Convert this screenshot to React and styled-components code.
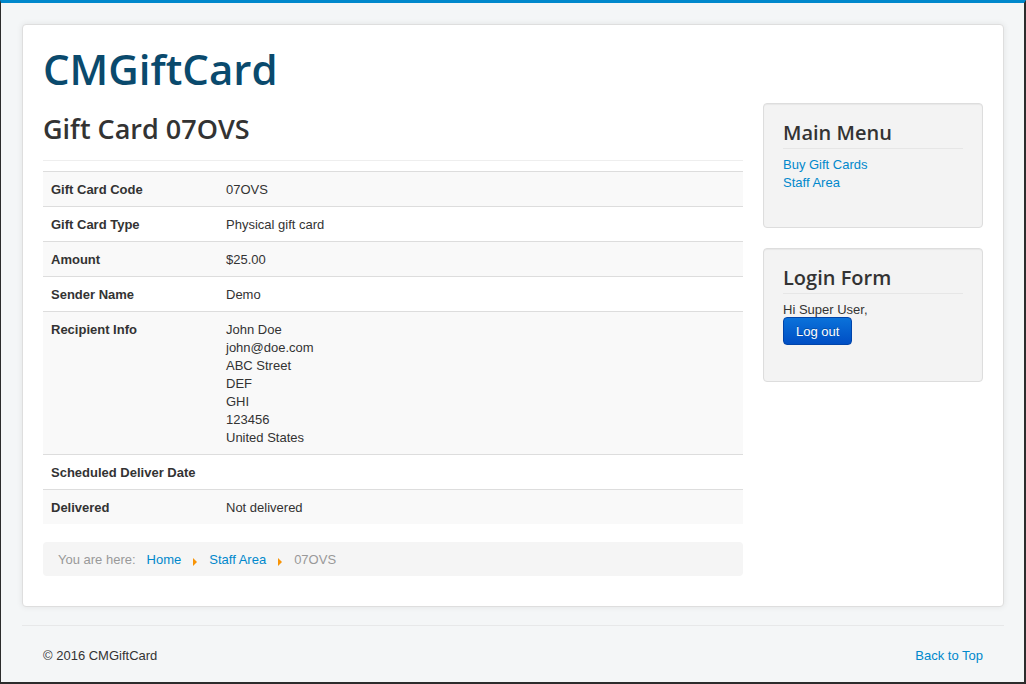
import React from "react";
import styled, { createGlobalStyle } from "styled-components";

const GlobalStyle = createGlobalStyle`
  html, body { margin: 0; padding: 0; }
  body {
    background: #f4f6f7;
    font-family: "Liberation Sans", Arial, sans-serif;
    font-size: 13px;
    line-height: 18px;
    color: #333;
  }
  * { box-sizing: border-box; }
`;

const Frame = styled.div`
  min-height: 684px;
  border-top: 3px solid #0088cc;
  border-left: 1px solid #2c2c2c;
  border-right: 2px solid #2c2c2c;
  border-bottom: 2px solid #2c2c2c;
  padding: 21px 20px 0 21px;
  display: flex;
  flex-direction: column;
`;

const Body = styled.div`
  background: #fff;
  border: 1px solid #dedede;
  border-radius: 4px;
  box-shadow: 0 0 6px rgba(0, 0, 0, 0.08);
  padding: 20px 20px 30px;
`;

const Brand = styled.div`
  font-family: "Open Sans", sans-serif;
  font-weight: 600;
  font-size: 42px;
  line-height: 48px;
  color: #0a4a6d;
  margin: 0 0 10px;
`;

const Row = styled.div`
  display: grid;
  grid-template-columns: 700px 220px;
  column-gap: 20px;
`;

const Main = styled.main``;

const PageHeader = styled.div`
  border-bottom: 1px solid #eee;
  margin: 0 0 10px;
  padding-bottom: 15px;
`;

const Title = styled.h2`
  font-family: "Open Sans", sans-serif;
  font-weight: 600;
  font-size: 27px;
  line-height: 32px;
  margin: 10px 0 0;
  color: #333;
`;

const Table = styled.table`
  width: 100%;
  border-collapse: collapse;
  border-spacing: 0;
`;

const Tr = styled.tr`
  background: ${(p) => (p.$striped ? "#f9f9f9" : "#fff")};
`;

const Th = styled.th`
  width: 175px;
  text-align: left;
  vertical-align: top;
  font-weight: bold;
  padding: 9px 8px 7px;
  border-top: 1px solid #ddd;
  line-height: 18px;
`;

const Td = styled.td`
  text-align: left;
  vertical-align: top;
  padding: 9px 8px 7px;
  border-top: 1px solid #ddd;
  line-height: 18px;
`;

const Breadcrumb = styled.ul`
  list-style: none;
  margin: 18px 0 0;
  padding: 9px 15px 7px;
  background: #f5f5f5;
  border-radius: 4px;
  display: flex;
  align-items: center;
`;

const Crumb = styled.li`
  display: flex;
  align-items: center;
  color: #999;
`;

const Label = styled.span`
  color: #999;
  margin-right: 11px;
`;

const Link = styled.a`
  color: #0088cc;
  text-decoration: none;
`;

const Divider = styled.span`
  display: inline-block;
  width: 0;
  height: 0;
  border-top: 4px solid transparent;
  border-bottom: 4px solid transparent;
  border-left: 4px solid #f89406;
  margin: 3px 12px 0 12px;
`;

const Side = styled.aside``;

const Well = styled.div`
  background: #f3f3f3;
  border: 1px solid #ddd;
  border-radius: 4px;
  box-shadow: inset 0 1px 1px rgba(0, 0, 0, 0.05);
  padding: 19px 19px 17px;
  margin-bottom: 20px;
`;

const WellTitle = styled.h3`
  font-family: "Open Sans", sans-serif;
  font-weight: 600;
  font-size: 20px;
  line-height: 20px;
  margin: 0 0 6px;
  padding: 0 0 5px;
  border-bottom: 1px solid #e6e6e6;
  color: #333;
`;

const Menu = styled.ul`
  list-style: none;
  margin: 0 0 18px;
  padding: 1px 0 0;
`;

const LogoutForm = styled.form`
  margin: 0 0 19px;
`;

const Greeting = styled.div`
  color: #333;
  padding-top: 1px;
  margin-bottom: -2px;
`;

const Button = styled.button`
  display: block;
  font-family: "Liberation Sans", Arial, sans-serif;
  font-size: 13px;
  line-height: 18px;
  color: #fff;
  padding: 5px 12px 3px;
  border: 1px solid #0044aa;
  border-radius: 4px;
  background: linear-gradient(#0a72da, #004ec4);
  text-shadow: 0 -1px 0 rgba(0, 0, 0, 0.25);
  cursor: pointer;
`;

const Footer = styled.footer`
  margin: 18px 0 0;
  border-top: 1px solid #e7e8e9;
  padding: 21px 21px 0 21px;
  display: flex;
  justify-content: space-between;
  color: #333;
`;

const rows = [
  ["Gift Card Code", ["07OVS"]],
  ["Gift Card Type", ["Physical gift card"]],
  ["Amount", ["$25.00"]],
  ["Sender Name", ["Demo"]],
  [
    "Recipient Info",
    ["John Doe", "john@doe.com", "ABC Street", "DEF", "GHI", "123456", "United States"],
  ],
  ["Scheduled Deliver Date", []],
  ["Delivered", ["Not delivered"]],
];

export default function App() {
  return (
    <>
      <GlobalStyle />
      <Frame>
        <Body>
          <Brand>CMGiftCard</Brand>
          <Row>
            <Main>
              <PageHeader>
                <Title>Gift Card 07OVS</Title>
              </PageHeader>
              <Table>
                <tbody>
                  {rows.map(([label, vals], i) => (
                    <Tr key={label} $striped={i % 2 === 0}>
                      <Th>{label}</Th>
                      <Td>
                        {vals.map((v) => (
                          <div key={v}>{v}</div>
                        ))}
                      </Td>
                    </Tr>
                  ))}
                </tbody>
              </Table>
              <Breadcrumb>
                <Crumb>
                  <Label>You are here:</Label>
                </Crumb>
                <Crumb>
                  <Link href="#">Home</Link>
                  <Divider />
                </Crumb>
                <Crumb>
                  <Link href="#">Staff Area</Link>
                  <Divider />
                </Crumb>
                <Crumb>07OVS</Crumb>
              </Breadcrumb>
            </Main>
            <Side>
              <Well>
                <WellTitle>Main Menu</WellTitle>
                <Menu>
                  <li>
                    <Link href="#">Buy Gift Cards</Link>
                  </li>
                  <li>
                    <Link href="#">Staff Area</Link>
                  </li>
                </Menu>
              </Well>
              <Well>
                <WellTitle>Login Form</WellTitle>
                <LogoutForm onSubmit={(e) => e.preventDefault()}>
                  <Greeting>Hi Super User,</Greeting>
                  <Button type="submit">Log out</Button>
                </LogoutForm>
              </Well>
            </Side>
          </Row>
        </Body>
        <Footer>
          <span>© 2016 CMGiftCard</span>
          <Link href="#">Back to Top</Link>
        </Footer>
      </Frame>
    </>
  );
}
